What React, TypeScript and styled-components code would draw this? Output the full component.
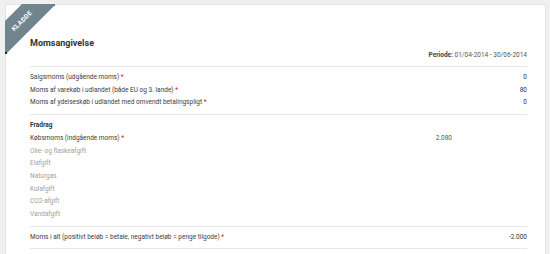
import styled, { createGlobalStyle } from "styled-components";

const GlobalStyle = createGlobalStyle`
  html, body {
    margin: 0;
    padding: 0;
    background: #f0f0f0;
    font-family: Roboto, "Liberation Sans", sans-serif;
  }
`;

type Line = {
  label: string;
  value?: string;
  sub?: string;
  required?: boolean;
  muted?: boolean;
};

const sales: Line[] = [
  { label: "Salgsmoms (udgående moms)", value: "0", required: true },
  { label: "Moms af varekøb i udlandet (både EU og 3. lande)", value: "80", required: true },
  { label: "Moms af ydelseskøb i udlandet med omvendt betalingspligt", value: "0", required: true },
];

const deductions: Line[] = [
  { label: "Købsmoms (indgående moms)", sub: "2.080", required: true },
  { label: "Olie- og flaskeafgift", muted: true },
  { label: "Elafgift", muted: true },
  { label: "Naturgas", muted: true },
  { label: "Kulafgift", muted: true },
  { label: "CO2-afgift", muted: true },
  { label: "Vandafgift", muted: true },
];

export default function App() {
  return (
    <>
      <GlobalStyle />
      <Page>
        <Sheet>
          <Ribbon>
            <RibbonText>KLADDE</RibbonText>
          </Ribbon>
          <Title>Momsangivelse</Title>
          <Period>
            <strong>Periode:</strong> 01/04-2014 - 30/06-2014
          </Period>
          <Group>
            {sales.map((l) => (
              <Row key={l.label} line={l} />
            ))}
          </Group>
          <Group>
            <GroupTitle>Fradrag</GroupTitle>
            {deductions.map((l) => (
              <Row key={l.label} line={l} />
            ))}
          </Group>
          <Group>
            <Row
              line={{
                label: "Moms i alt (positivt beløb = betale, negativt beløb = penge tilgode)",
                value: "-2.000",
                required: true,
              }}
            />
          </Group>
        </Sheet>
      </Page>
    </>
  );
}

function Row({ line }: { line: Line }) {
  return (
    <RowWrap>
      <Label $muted={line.muted}>
        {line.label}
        {line.required && <Star> *</Star>}
      </Label>
      <Sub>{line.sub}</Sub>
      <Value>{line.value}</Value>
    </RowWrap>
  );
}

const Page = styled.div`
  padding: 4px 4px 0 5px;
  height: 254px;
  box-sizing: border-box;
  overflow: hidden;
`;

const Sheet = styled.div`
  position: relative;
  background: #fff;
  border: 1px solid #e4e4e4;
  border-bottom: none;
  min-height: 260px;
  padding: 31px 18px 0 24px;
`;

const Ribbon = styled.div`
  position: absolute;
  top: -1px;
  left: -1px;
  width: 50px;
  height: 50px;
  overflow: hidden;
  &::before,
  &::after {
    content: "";
    position: absolute;
    width: 2px;
    height: 2px;
    background: #222;
  }
  &::before {
    top: 0;
    right: 0;
  }
  &::after {
    bottom: 0;
    left: 0;
  }
`;

const RibbonText = styled.div`
  position: absolute;
  top: 5px;
  left: -23px;
  width: 80px;
  height: 24px;
  line-height: 24px;
  background: #70858e;
  color: #fff;
  font-size: 6.5px;
  font-weight: 700;
  letter-spacing: 0.3px;
  text-align: center;
  transform: rotate(-45deg);
`;

const Title = styled.h1`
  margin: 0;
  font-size: 9px;
  font-weight: 700;
  color: #333;
  line-height: 14px;
`;

const Period = styled.div`
  text-align: right;
  font-size: 6.5px;
  color: #555;
  line-height: 10px;
  padding-bottom: 6px;
  border-bottom: 1px solid #e8e8e8;
  strong {
    font-weight: 700;
    color: #444;
  }
`;

const Group = styled.div`
  padding: 4px 0 5px;
  border-bottom: 1px solid #e8e8e8;
`;

const GroupTitle = styled.div`
  font-size: 6.5px;
  font-weight: 700;
  color: #333;
  line-height: 12.7px;
`;

const RowWrap = styled.div`
  display: grid;
  grid-template-columns: 1fr 60px 75px;
  align-items: center;
  font-size: 6.5px;
  line-height: 12.7px;
`;

const Label = styled.div<{ $muted?: boolean }>`
  color: ${(p) => (p.$muted ? "#a0a0a0" : "#3c3c3c")};
  white-space: nowrap;
`;

const Star = styled.span`
  color: #e01010;
`;

const Sub = styled.div`
  text-align: right;
  color: #555;
`;

const Value = styled.div`
  text-align: right;
  color: #333;
`;
